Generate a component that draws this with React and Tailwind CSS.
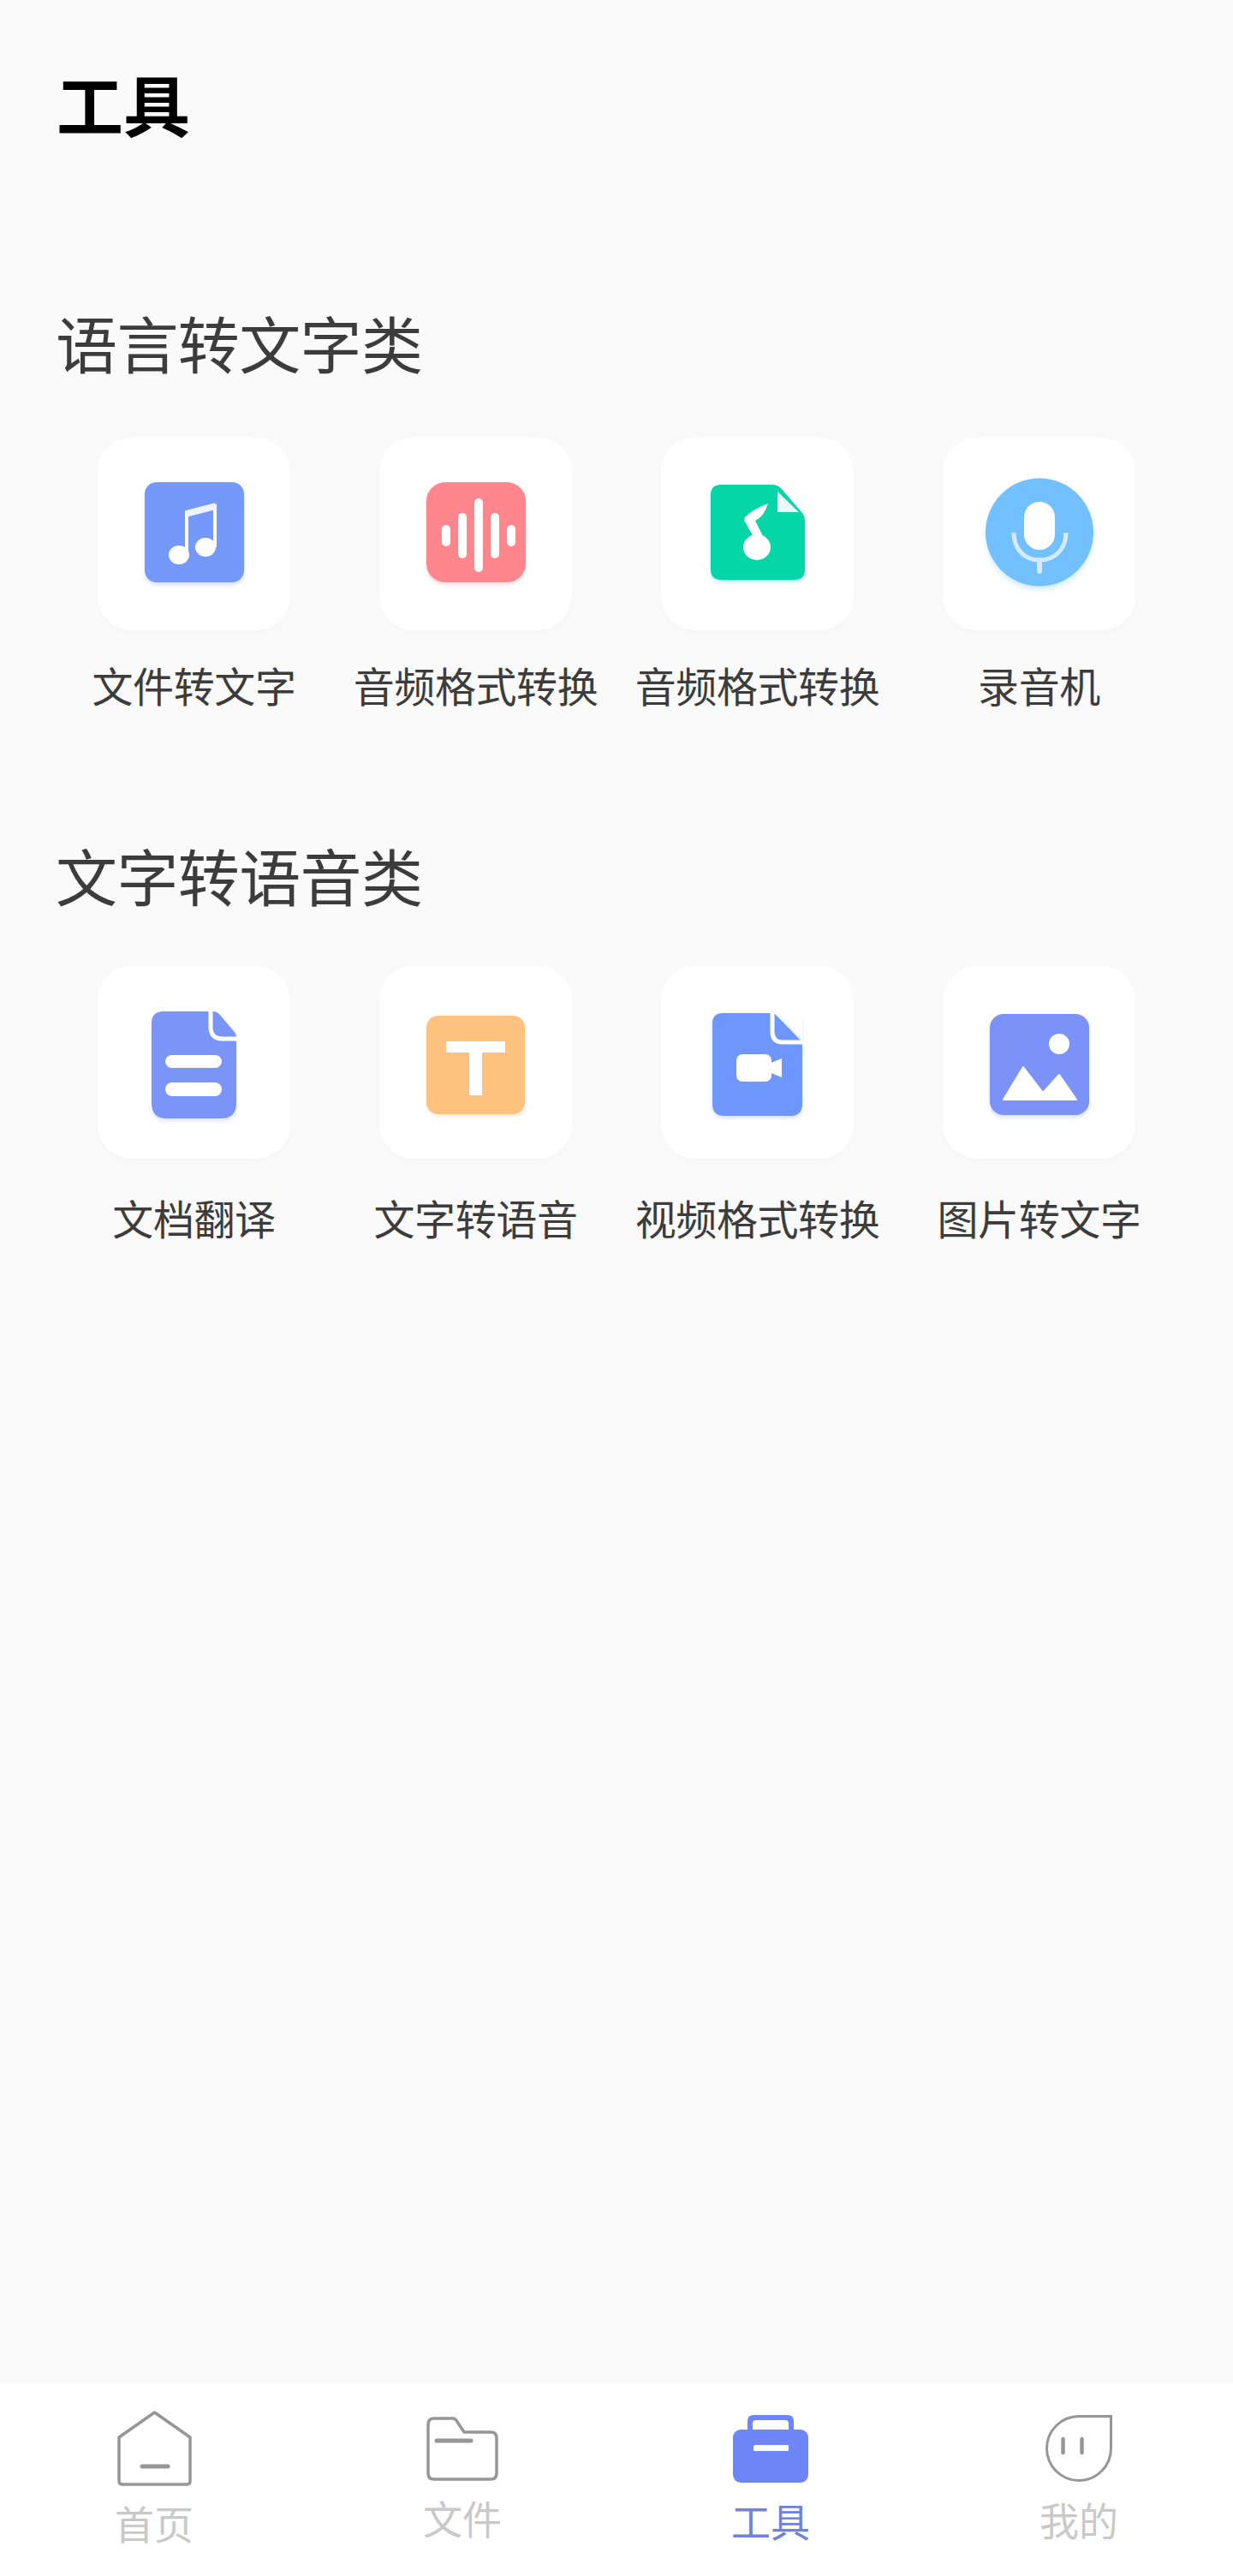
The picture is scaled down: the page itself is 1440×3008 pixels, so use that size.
import React from 'react';

const MusicIcon = () => (
  <svg width="116" height="117" viewBox="0 0 116 117" className="drop-shadow-[0_3px_2px_rgba(116,153,251,0.3)]">
    <rect width="116" height="117" rx="14" fill="#7499fb" />
    <path d="M49 84V36L82 28V76" fill="none" stroke="#fff" strokeWidth="4" />
    <path d="M48 37L83 28" stroke="#eef3ff" strokeWidth="8" />
    <ellipse cx="40" cy="85" rx="12" ry="11" fill="#fff" />
    <ellipse cx="71" cy="76" rx="12" ry="11" fill="#fff" />
  </svg>
);

const WaveIcon = () => (
  <svg width="116" height="117" viewBox="0 0 116 117" className="drop-shadow-[0_3px_2px_rgba(254,134,140,0.3)]">
    <rect width="116" height="117" rx="22" fill="#fe868c" />
    <g fill="#fff">
      <rect x="18" y="50" width="10" height="25" rx="5" />
      <rect x="37" y="36" width="10" height="53" rx="5" />
      <rect x="56" y="19" width="10" height="86" rx="5" />
      <rect x="75" y="36" width="10" height="53" rx="5" />
      <rect x="94" y="50" width="10" height="25" rx="5" />
    </g>
  </svg>
);

const GreenFileIcon = () => (
  <svg width="110" height="111" viewBox="0 0 110 111" className="drop-shadow-[0_3px_2px_rgba(5,214,168,0.25)]">
    <path d="M12 0H72Q78 0 82 4L106 32Q110 36 110 42V99Q110 111 98 111H12Q0 111 0 99V12Q0 0 12 0Z" fill="#05d6a8" />
    <path d="M78 8V32H103Z" fill="#e8fbf6" />
    <path d="M67 72L52 42Q62 38 67 22Q50 28 40 38Q38 42 41 45L55 70" fill="#fff" />
    <ellipse cx="54" cy="73" rx="16" ry="15" fill="#fff" />
  </svg>
);

const MicIcon = () => (
  <svg width="126" height="127" viewBox="0 0 126 127" className="drop-shadow-[0_4px_3px_rgba(114,192,253,0.3)]">
    <circle cx="63" cy="63.5" r="63" fill="#72c0fd" />
    <rect x="45" y="28" width="36" height="56" rx="18" fill="#fff" />
    <path d="M33 64C33 84 46 96 63 96S94 84 94 64" fill="none" stroke="#d4ebfe" strokeWidth="5" />
    <path d="M63 96V109" stroke="#d4ebfe" strokeWidth="6" strokeLinecap="round" />
  </svg>
);

const DocIcon = () => (
  <svg width="99" height="125" viewBox="0 0 99 125" className="drop-shadow-[0_3px_2px_rgba(123,148,248,0.25)]">
    <path d="M14 0H72Q76 0 79 3L95 22Q99 26 99 30V107Q99 125 81 125H18Q0 125 0 107V14Q0 0 14 0Z" fill="#7b94f8" />
    <path d="M69 0V18Q69 32 83 32H99" fill="none" stroke="#fff" strokeWidth="5" />
    <rect x="16" y="51" width="66" height="15" rx="7.5" fill="#fff" />
    <rect x="16" y="83" width="66" height="16" rx="8" fill="#fff" />
  </svg>
);

const TextIcon = () => (
  <svg width="115" height="115" viewBox="0 0 115 115" className="drop-shadow-[0_3px_2px_rgba(253,194,127,0.3)]">
    <rect width="115" height="115" rx="14" fill="#fdc27f" />
    <path d="M23 30H92V43H65V93H50V43H23Z" fill="#fff" />
  </svg>
);

const VideoIcon = () => (
  <svg width="105" height="120" viewBox="0 0 105 120" className="drop-shadow-[0_3px_2px_rgba(110,150,251,0.25)]">
    <path d="M12 0H72L105 34V106Q105 120 91 120H14Q0 120 0 106V12Q0 0 12 0Z" fill="#6e96fb" />
    <path d="M70 0V22Q70 34 82 34H105" fill="none" stroke="#fff" strokeWidth="5" />
    <path d="M75 1L105 31V5L100 1Z" fill="#fff" />
    <path d="M78 8V28H97Z" fill="#6e96fb" />
    <rect x="28" y="48" width="41" height="32" rx="7" fill="#fff" />
    <path d="M66 59L81 53V75L66 69Z" fill="#fff" />
  </svg>
);

const ImageIcon = () => (
  <svg width="116" height="118" viewBox="0 0 116 118" className="drop-shadow-[0_3px_2px_rgba(123,146,248,0.3)]">
    <rect width="116" height="118" rx="16" fill="#7b92f8" />
    <ellipse cx="81" cy="35" rx="12" ry="12" fill="#fff" />
    <path d="M16 100L39 62L62 92L81 71L101 100Z" fill="#fff" stroke="#fff" strokeWidth="2" strokeLinejoin="round" />
  </svg>
);

const HomeIcon = () => (
  <svg width="87" height="88" viewBox="0 0 87 88" fill="none" stroke="#969696">
    <path d="M43.5 2L2 31V82Q2 86 6 86H81Q85 86 85 82V31Z" strokeWidth="3.5" strokeLinejoin="round" />
    <path d="M29 65H59" strokeWidth="5" strokeLinecap="round" />
  </svg>
);

const FolderIcon = () => (
  <svg width="84" height="75" viewBox="0 0 84 75" fill="none" stroke="#969696">
    <path d="M9 2H31Q34 2 36 6L44 18H75Q82 18 82 25V66Q82 73 75 73H9Q2 73 2 66V9Q2 2 9 2Z" strokeWidth="3.5" strokeLinejoin="round" />
    <path d="M12 28H52" strokeWidth="5" strokeLinecap="round" />
  </svg>
);

const ToolIcon = () => (
  <svg width="88" height="79" viewBox="0 0 88 79">
    <path d="M17 20V7Q17 0 24 0H64Q71 0 71 7V20H65V10Q65 6 61 6H27Q23 6 23 10V20Z" fill="#6f86f9" />
    <rect y="17" width="88" height="62" rx="9" fill="#6f86f9" />
    <rect x="24" y="35" width="41" height="7" rx="1.5" fill="#fff" />
  </svg>
);

const MeIcon = () => (
  <svg width="78" height="78" viewBox="0 0 78 78" fill="none" stroke="#969696">
    <path d="M76.5 1.5H39A37.5 37.5 0 1 0 76.5 39Z" strokeWidth="3" />
    <path d="M20.5 28V44M42.5 28V44" strokeWidth="4.5" strokeLinecap="round" />
  </svg>
);

const speechTools = [
  { label: '文件转文字', Icon: MusicIcon },
  { label: '音频格式转换', Icon: WaveIcon },
  { label: '音频格式转换', Icon: GreenFileIcon },
  { label: '录音机', Icon: MicIcon },
];

const textTools = [
  { label: '文档翻译', Icon: DocIcon },
  { label: '文字转语音', Icon: TextIcon },
  { label: '视频格式转换', Icon: VideoIcon },
  { label: '图片转文字', Icon: ImageIcon },
];

const tabs = [
  { label: '首页', Icon: HomeIcon, box: 'pt-[32px]', gap: 'mt-[19px]', color: 'text-[#c9c9c9]' },
  { label: '文件', Icon: FolderIcon, box: 'pt-[39px]', gap: 'mt-[19px]', color: 'text-[#c9c9c9]' },
  { label: '工具', Icon: ToolIcon, box: 'pt-[37px]', gap: 'mt-[20px]', color: 'text-[#6f83d8]' },
  { label: '我的', Icon: MeIcon, box: 'pt-[37px]', gap: 'mt-[20px]', color: 'text-[#c9c9c9]' },
];

function ToolRow({ items, cardPad, labelGap }) {
  return (
    <div className="grid grid-cols-4">
      {items.map(({ label, Icon }, i) => (
        <div key={i} className="flex flex-col items-center">
          <div className={`w-[225px] h-[225px] rounded-[40px] bg-white shadow-[0_4px_10px_rgba(0,0,0,0.02)] flex items-center justify-center ${cardPad}`}>
            <Icon />
          </div>
          <div className={`text-[48px] leading-[48px] text-[#3c3c3c] whitespace-nowrap tracking-[-0.4px] ${labelGap}`}>{label}</div>
        </div>
      ))}
    </div>
  );
}

export default function App() {
  return (
    <div className="w-[1440px] h-[3008px] flex flex-col bg-[#fafafa] font-['Noto_Sans_CJK_SC',sans-serif]">
      <main className="flex-1">
        <h1 className="pl-[66px] pt-[81px] text-[78px] leading-[78px] font-bold text-black">工具</h1>

        <h2 className="pl-[65px] mt-[204px] text-[72px] leading-[72px] font-normal text-[#3c3c3c] tracking-[-0.6px]">语言转文字类</h2>
        <div className="px-[62px] mt-[76px]">
          <ToolRow items={speechTools} cardPad="pb-[5px]" labelGap="mt-[39px]" />
        </div>

        <h2 className="pl-[65px] mt-[162px] text-[72px] leading-[72px] font-normal text-[#3c3c3c] tracking-[-0.6px]">文字转语音类</h2>
        <div className="px-[62px] mt-[71px]">
          <ToolRow items={textTools} cardPad="pt-[5px]" labelGap="mt-[44px]" />
        </div>
      </main>

      <nav className="h-[225px] bg-white grid grid-cols-4">
        {tabs.map(({ label, Icon, box, gap, color }) => (
          <div key={label} className={`flex flex-col items-center ${box}`}>
            <Icon />
            <span className={`text-[46px] leading-[46px] ${gap} ${color}`}>{label}</span>
          </div>
        ))}
      </nav>
    </div>
  );
}
